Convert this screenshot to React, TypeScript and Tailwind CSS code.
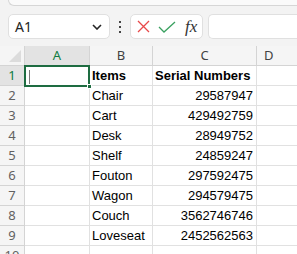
import React from "react";

const rows: [string, string][] = [
  ["Items", "Serial Numbers"],
  ["Chair", "29587947"],
  ["Cart", "429492759"],
  ["Desk", "28949752"],
  ["Shelf", "24859247"],
  ["Fouton", "297592475"],
  ["Wagon", "294579475"],
  ["Couch", "3562746746"],
  ["Loveseat", "2452562563"],
];

export default function App() {
  return (
    <div className="w-[297px] h-[254px] overflow-hidden bg-[#f3f3f3] flex flex-col" style={{ fontFamily: "'Liberation Sans', Arial, sans-serif" }}>
      {/* ribbon bottom */}
      <div className="h-[6px] ml-[8px] bg-[#fafafa] border-b border-l border-[#d6d6d6] rounded-bl-[6px] shrink-0" />
      {/* formula bar */}
      <div className="flex items-center mt-[8px] h-[25px] shrink-0">
        <div className="ml-[8px] w-[102px] h-[25px] bg-white border border-[#e0e0e0] rounded-[5px] flex items-center pl-[6px] pr-[6px] justify-between">
          <span className="text-[14px] text-[#242424]" style={{ fontFamily: "'Noto Sans', sans-serif" }}>A1</span>
          <svg width="10" height="6" viewBox="0 0 10 6" className="mr-[1px]">
            <path d="M1 1 L5 5 L9 1" fill="none" stroke="#242424" strokeWidth="1.6" />
          </svg>
        </div>
        <div className="w-[20px] flex flex-col items-center gap-[3px]">
          <div className="w-[2px] h-[2px] bg-[#444]" />
          <div className="w-[2px] h-[2px] bg-[#444]" />
          <div className="w-[2px] h-[2px] bg-[#444]" />
        </div>
        <div className="w-[73px] h-[25px] bg-white border border-[#e0e0e0] rounded-[5px] flex items-center pl-[6px]">
          <svg width="13" height="13" viewBox="0 0 13 13">
            <path d="M1 1 L12 12 M12 1 L1 12" stroke="#e8494a" strokeWidth="1.3" fill="none" />
          </svg>
          <svg width="18" height="12" viewBox="0 0 18 12" className="ml-[8px]">
            <path d="M1 6 L6 11 L17 1" stroke="#3aa160" strokeWidth="1.3" fill="none" />
          </svg>
          <span className="ml-[9px] text-[17px] italic text-[#333] leading-none" style={{ fontFamily: "'Liberation Serif', serif" }}>fx</span>
        </div>
        <div className="ml-[5px] flex-1 h-[25px] bg-white border border-[#e0e0e0] rounded-l-[5px] border-r-0" />
      </div>
      {/* grid */}
      <div className="mt-[7px] grid grid-cols-[25px_65px_63px_104px_1fr] auto-rows-[20px] bg-white text-[13px] text-black">
        {/* header row */}
        <div className="bg-[#f5f5f5] border-r border-b border-[#d4d4d4] relative overflow-hidden">
          <div className="absolute right-[3px] bottom-[3px] w-0 h-0 border-l-[12px] border-l-transparent border-b-[12px] border-b-[#dcdcdc]" />
        </div>
        <div className="bg-[#e3e3e3] border-r border-b border-[#d4d4d4] flex items-center justify-center text-[#107c41]" style={{ fontFamily: "'Noto Sans', sans-serif" }}>A</div>
        <div className="bg-[#f5f5f5] border-r border-b border-[#d4d4d4] flex items-center justify-center text-[#424242]" style={{ fontFamily: "'Noto Sans', sans-serif" }}>B</div>
        <div className="bg-[#f5f5f5] border-r border-b border-[#d4d4d4] flex items-center justify-center text-[#424242]" style={{ fontFamily: "'Noto Sans', sans-serif" }}>C</div>
        <div className="bg-[#f5f5f5] border-b border-[#d4d4d4] flex items-center justify-start pl-[7px] text-[#424242]" style={{ fontFamily: "'Noto Sans', sans-serif" }}>D</div>
        {rows.map((r, i) => (
          <React.Fragment key={i}>
            <div
              className={`${i === 0 ? "bg-[#e3e3e3] text-[#107c41]" : "bg-[#f5f5f5] text-[#616161]"} border-r border-b border-[#d4d4d4] flex items-center justify-center`}
              style={{ fontFamily: "'Noto Sans', sans-serif" }}
            >
              {i + 1}
            </div>
            <div className="border-r border-b border-[#e1e1e1] relative">
              {i === 0 && (
                <div className="absolute left-[-1px] top-[-1px] w-[66px] h-[22px] border-2 border-[#1e6c41] z-10">
                  <div className="absolute left-[3px] top-[3px] w-px h-[14px] bg-[#777]" />
                  <div className="absolute right-[-4px] bottom-[-4px] w-[5px] h-[5px] bg-[#1e6c41] border border-white" />
                </div>
              )}
            </div>
            <div className={`border-r border-b border-[#e1e1e1] flex items-center pl-[2px] whitespace-nowrap ${i === 0 ? "font-bold" : ""}`}>{r[0]}</div>
            <div className={`border-r border-b border-[#e1e1e1] flex items-center whitespace-nowrap ${i === 0 ? "font-bold pl-[2px]" : "justify-end pr-[3px]"}`}>{r[1]}</div>
            <div className="border-b border-[#e1e1e1]" />
          </React.Fragment>
        ))}
        <div className="bg-[#f5f5f5] border-r border-[#d4d4d4] flex items-center justify-center text-[#616161]" style={{ fontFamily: "'Noto Sans', sans-serif" }}>10</div>
        <div className="border-r border-[#e1e1e1]" />
        <div className="border-r border-[#e1e1e1]" />
        <div className="border-r border-[#e1e1e1]" />
        <div />
      </div>
    </div>
  );
}
